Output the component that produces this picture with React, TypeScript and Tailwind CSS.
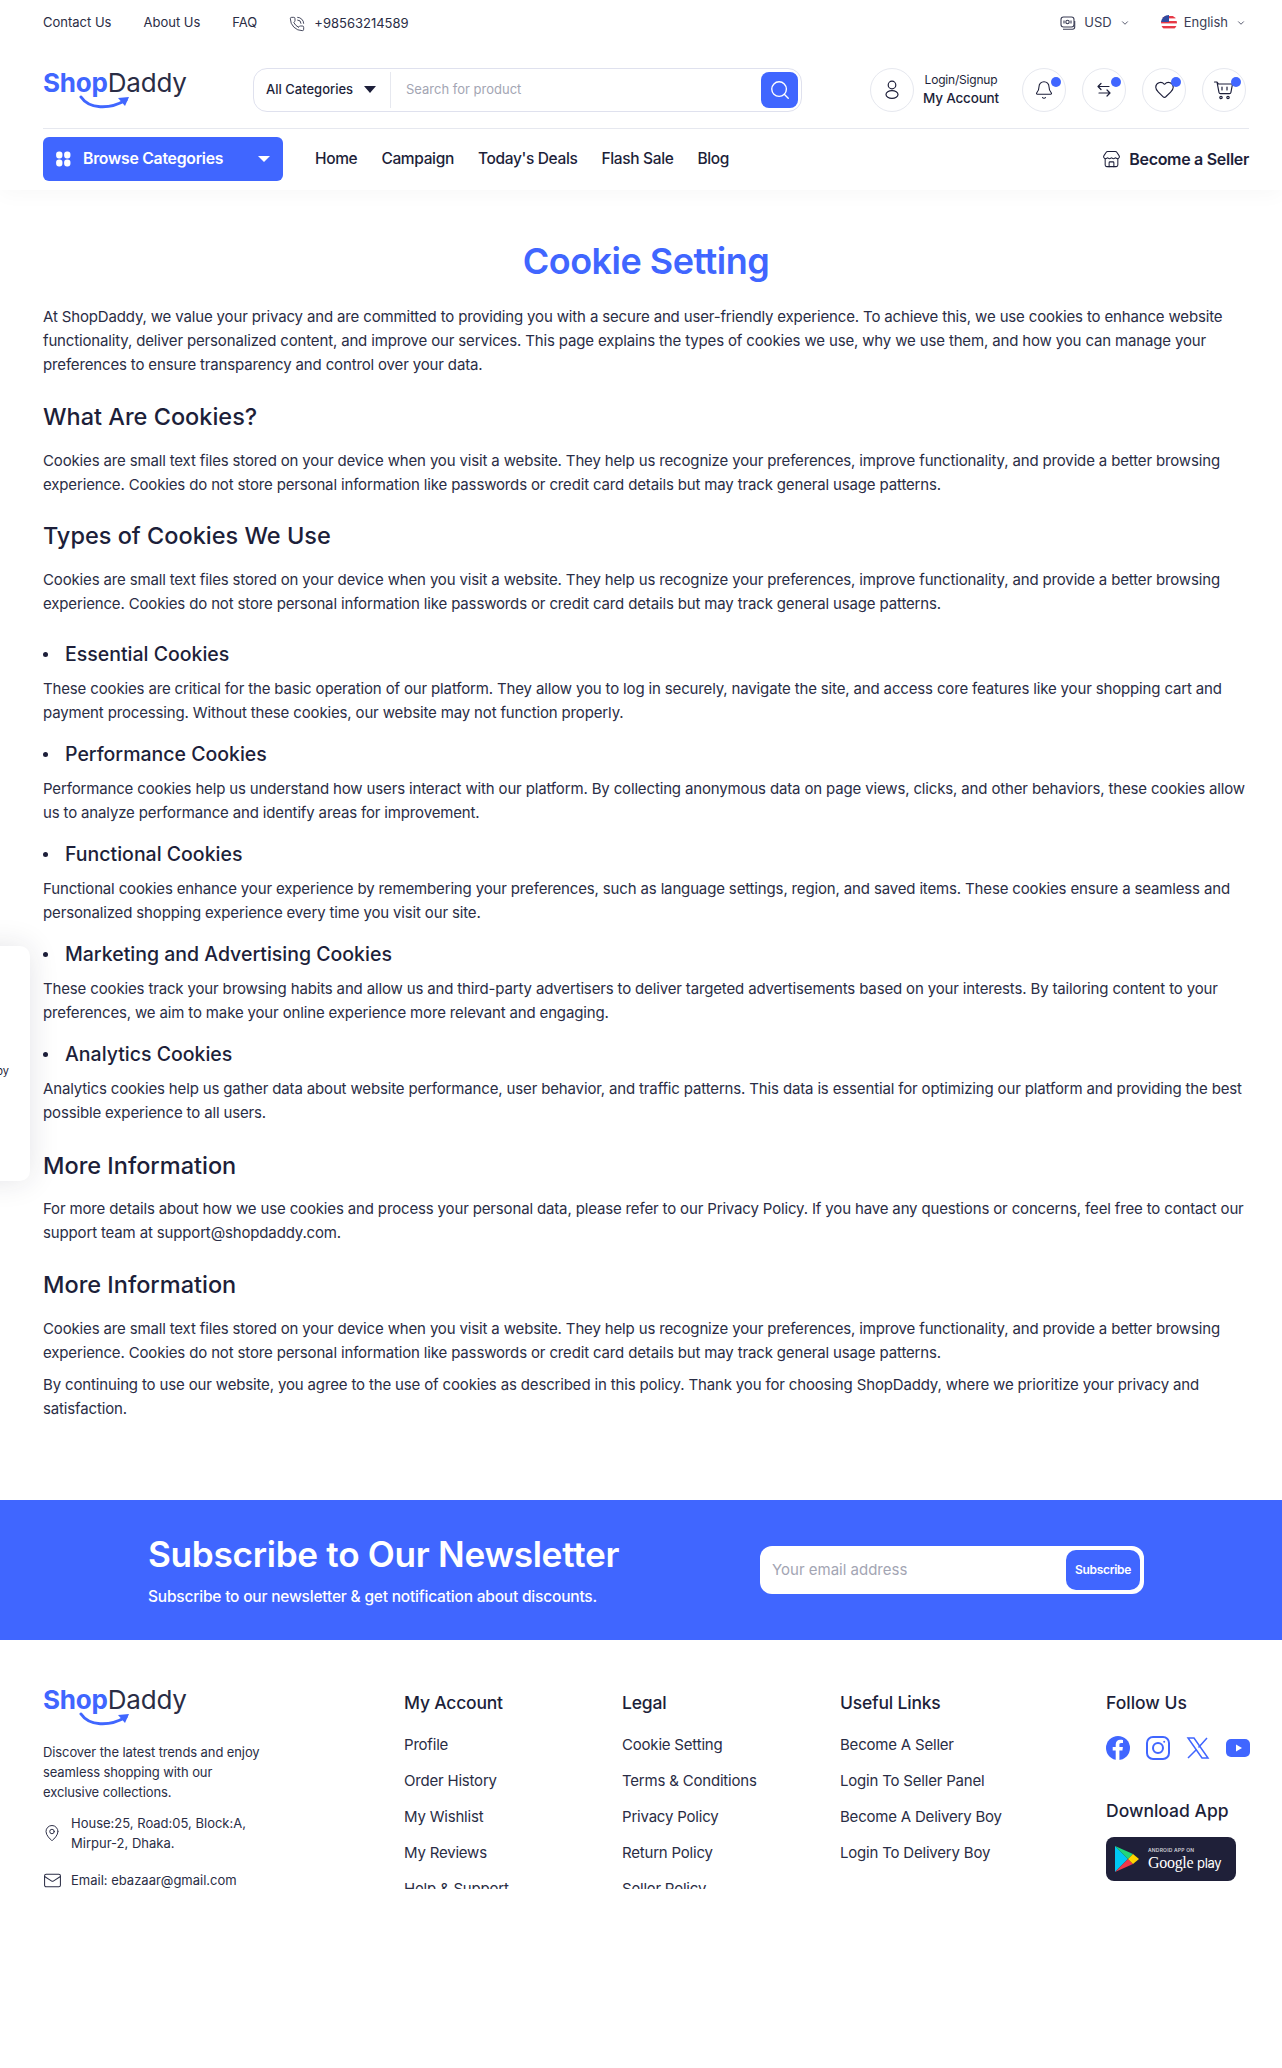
import { ChevronDown, MapPin, Mail, PhoneCall, Search, Bell, Heart, Store } from "lucide-react";

const font = "font-['Inter','Noto_Sans',sans-serif]";

function Logo() {
  return (
    <div className="relative h-[44px] w-[144px] font-['Inter',sans-serif] text-[26px] leading-[30px] tracking-[-0.2px]">
      <span className="font-bold text-[#4066ff]">Shop</span>
      <span className="font-normal text-[#2a2d45]">Daddy</span>
      <svg className="absolute left-[36px] top-[27px]" width="54" height="17" viewBox="0 0 54 17" fill="none">
        <path d="M2 2 C10 14 30 15 47 5" stroke="#4066ff" strokeWidth="3" strokeLinecap="round" />
        <path d="M39 3 L50 2 L46 11" fill="#4066ff" />
      </svg>
    </div>
  );
}

function IconCircle({ children }: { children: React.ReactNode }) {
  return (
    <div className="relative flex h-[44px] w-[44px] shrink-0 items-center justify-center rounded-full border border-[#e6e8ef]">
      {children}
      <span className="absolute right-[4px] top-[8px] h-[10px] w-[10px] rounded-full bg-[#4066ff]" />
    </div>
  );
}

function Para({ children }: { children: React.ReactNode }) {
  return <p className="text-[15px] leading-[24px] tracking-[-0.15px] text-[#2a2d45]">{children}</p>;
}

function H2({ children }: { children: React.ReactNode }) {
  return <h2 className="text-[23.5px] font-medium leading-[32px] text-[#1d1f3a]">{children}</h2>;
}

function Bullet({ title, children }: { title: string; children: React.ReactNode }) {
  return (
    <div className="mb-[15px]">
      <div className="mb-[9px] flex items-center">
        <span className="mr-[17px] h-[5px] w-[5px] rounded-full bg-[#1d1f3a]" />
        <h3 className="text-[19.5px] font-medium leading-[28px] text-[#1d1f3a]">{title}</h3>
      </div>
      <Para>{children}</Para>
    </div>
  );
}

const cookieText =
  "Cookies are small text files stored on your device when you visit a website. They help us recognize your preferences, improve functionality, and provide a better browsing experience. Cookies do not store personal information like passwords or credit card details but may track general usage patterns.";

function FooterCol({ title, items, className }: { title: string; items: string[]; className: string }) {
  return (
    <div className={className}>
      <h4 className="mb-[16px] text-[17.5px] font-medium leading-[28px] tracking-[-0.2px] text-[#1d1f3a]">{title}</h4>
      <ul className="space-y-[12px] text-[15px] leading-[24px] tracking-[-0.2px] text-[#2a2d45]">
        {items.map((item) => (
          <li key={item}>{item}</li>
        ))}
      </ul>
    </div>
  );
}

export default function App() {
  return (
    <div className={`${font} relative h-[2068px] w-full overflow-hidden bg-white text-[#1d1f3a]`}>
      <header className="h-[190px] bg-white pl-[43px] pr-[33px] shadow-[0_4px_20px_rgba(0,0,0,0.03)]">
        <div className="flex h-[46px] items-center justify-between text-[13px]">
          <div className="flex items-center gap-[32px] text-[#2a2d45]">
            <span>Contact Us</span>
            <span>About Us</span>
            <span>FAQ</span>
            <span className="flex items-center gap-[9px] pt-[2px]">
              <PhoneCall size={16} strokeWidth={1.3} />
              +98563214589
            </span>
          </div>
          <div className="flex items-center gap-[5px] pr-[3px] text-[#3a3d55]">
            <svg width="16" height="16" viewBox="0 0 16 16" fill="none" stroke="#3a3d55" strokeWidth="1.1">
              <rect x="1" y="2" width="13" height="10" rx="2.5" />
              <path d="M3 14.2h9.5c1.3 0 2.2-.8 2.2-2.2V6" />
              <circle cx="7.5" cy="7" r="1.7" />
              <path d="M4 5.5v3M11 5.5v3" />
            </svg>
            <span className="ml-[3px]">USD</span>
            <ChevronDown size={10} className="ml-[3px] mr-[26px]" />
            <svg width="16" height="16" viewBox="0 0 16 16">
              <defs>
                <clipPath id="flag"><circle cx="8" cy="8" r="8" /></clipPath>
              </defs>
              <g clipPath="url(#flag)">
                <rect width="16" height="16" fill="#fff" />
                <rect y="1" width="16" height="2.4" fill="#e63946" />
                <rect y="6" width="16" height="2.4" fill="#e63946" />
                <rect y="11" width="16" height="2.4" fill="#e63946" />
                <rect width="8" height="7" fill="#2f4aa0" />
              </g>
            </svg>
            <span className="ml-[2px]">English</span>
            <ChevronDown size={10} className="ml-[3px]" />
          </div>
        </div>

        <div className="flex h-[83px] items-center border-b border-[#e6e8ef] pt-[5px]">
          <Logo />
          <div className="ml-[66px] flex h-[44px] w-[549px] shrink-0 items-center rounded-[14px] border border-[#dfe1ee] pr-[3px]">
            <div className="flex h-[36px] w-[137px] items-center border-r border-[#e6e8ef] pl-[12px] text-[13px] font-medium">
              All Categories
              <span className="ml-[11px] h-0 w-0 border-x-[6px] border-t-[7px] border-x-transparent border-t-[#1d1f3a]" />
            </div>
            <input
              placeholder="Search for product"
              className="ml-[15px] min-w-0 flex-1 bg-transparent text-[13px] outline-none placeholder:text-[#a3a5b3]"
            />
            <button className="flex h-[36px] w-[37px] items-center justify-center rounded-[8px] bg-[#4066ff] text-white">
              <Search size={22} strokeWidth={1.5} />
            </button>
          </div>
          <div className="ml-[68px] flex shrink-0 items-center">
            <div className="flex h-[44px] w-[44px] items-center justify-center rounded-full border border-[#e6e8ef]">
              <svg width="20" height="22" viewBox="0 0 20 22" fill="none" stroke="#1d1f3a" strokeWidth="1.2">
                <circle cx="10" cy="6" r="3.8" />
                <ellipse cx="10" cy="15.5" rx="6" ry="3.8" />
              </svg>
            </div>
            <div className="ml-[9px] w-[76px] whitespace-nowrap text-center">
              <div className="text-[12px] leading-[16px] tracking-[-0.2px]">Login/Signup</div>
              <div className="text-[13.5px] font-medium leading-[20px] tracking-[-0.2px]">My Account</div>
            </div>
          </div>
          <div className="ml-[23px] flex shrink-0 gap-[16px]">
            <IconCircle><Bell size={20} strokeWidth={1.3} /></IconCircle>
            <IconCircle>
              <svg width="18" height="18" viewBox="0 0 18 18" fill="none" stroke="#1d1f3a" strokeWidth="1.2" strokeLinecap="round" strokeLinejoin="round">
                <path d="M14 5.5H3M6 2.5l-3 3 3 3" />
                <path d="M4 12h11M12 9l3 3-3 3" />
              </svg>
            </IconCircle>
            <IconCircle><Heart size={21} strokeWidth={1.3} /></IconCircle>
            <IconCircle>
              <svg width="22" height="22" viewBox="0 0 22 22" fill="none" stroke="#1d1f3a" strokeWidth="1.2" strokeLinecap="round" strokeLinejoin="round">
                <path d="M1.5 3h2.5l1.5 2h14l-1.6 8.5a1.5 1.5 0 0 1-1.5 1.2H7.5a1.5 1.5 0 0 1-1.5-1.2L4 3" />
                <path d="M9 8v3M14 8v3" />
                <circle cx="8" cy="18.5" r="1.2" />
                <circle cx="15" cy="18.5" r="1.2" />
              </svg>
            </IconCircle>
          </div>
        </div>

        <div className="flex h-[60px] items-center">
          <button className="flex h-[44px] w-[240px] shrink-0 items-center rounded-[6px] bg-[#4066ff] pl-[12px] pr-[13px] text-[15.8px] font-semibold tracking-[-0.25px] text-white">
            <svg width="16" height="16" viewBox="0 0 14 14" fill="white" className="mr-[12px]">
              <rect x="1" y="0.5" width="5.5" height="6" rx="2.5" />
              <rect x="8" y="0.5" width="5.5" height="6" rx="2.5" />
              <rect x="1" y="7.5" width="5.5" height="6" rx="2.5" />
              <rect x="8" y="7.5" width="5.5" height="6" rx="2.5" />
            </svg>
            Browse Categories
            <span className="ml-auto h-0 w-0 border-x-[6px] border-t-[6px] border-x-transparent border-t-white" />
          </button>
          <nav className="ml-[32px] flex gap-[24px] text-[15.5px] font-medium tracking-[-0.35px]">
            <span>Home</span>
            <span>Campaign</span>
            <span>Today's Deals</span>
            <span>Flash Sale</span>
            <span>Blog</span>
          </nav>
          <div className="ml-auto flex items-center gap-[8px] text-[16px] font-semibold tracking-[-0.3px]">
            <Store size={19} strokeWidth={1.3} />
            Become a Seller
          </div>
        </div>
      </header>

      {/* left drawer peeking in */}
      <div className="absolute left-[-90px] top-[946px] flex h-[235px] w-[120px] items-center justify-end rounded-[10px] bg-white pr-[21px] pt-[16px] text-[11px] shadow-[0_0_30px_rgba(30,30,60,0.12)]">
        py
      </div>

      <main className="pl-[43px] pr-[33px] pt-[49px]">
        <h1 className="mb-[22px] text-center text-[36px] font-semibold leading-[44px] tracking-[-0.5px] text-[#4066ff]">
          Cookie Setting
        </h1>
        <Para>
          At ShopDaddy, we value your privacy and are committed to providing you with a secure and user-friendly experience. To achieve this, we use cookies to enhance website functionality, deliver personalized content, and improve our services. This page explains the types of cookies we use, why we use them, and how you can manage your preferences to ensure transparency and control over your data.
        </Para>

        <div className="mb-[16px] mt-[24px]"><H2>What Are Cookies?</H2></div>
        <Para>{cookieText}</Para>

        <div className="mb-[16px] mt-[23px]"><H2>Types of Cookies We Use</H2></div>
        <Para>{cookieText}</Para>

        <div className="mt-[24px]">
          <Bullet title="Essential Cookies">
            These cookies are critical for the basic operation of our platform. They allow you to log in securely, navigate the site, and access core features like your shopping cart and payment processing. Without these cookies, our website may not function properly.
          </Bullet>
          <Bullet title="Performance Cookies">
            Performance cookies help us understand how users interact with our platform. By collecting anonymous data on page views, clicks, and other behaviors, these cookies allow us to analyze performance and identify areas for improvement.
          </Bullet>
          <Bullet title="Functional Cookies">
            Functional cookies enhance your experience by remembering your preferences, such as language settings, region, and saved items. These cookies ensure a seamless and personalized shopping experience every time you visit our site.
          </Bullet>
          <Bullet title="Marketing and Advertising Cookies">
            These cookies track your browsing habits and allow us and third-party advertisers to deliver targeted advertisements based on your interests. By tailoring content to your preferences, we aim to make your online experience more relevant and engaging.
          </Bullet>
          <Bullet title="Analytics Cookies">
            Analytics cookies help us gather data about website performance, user behavior, and traffic patterns. This data is essential for optimizing our platform and providing the best possible experience to all users.
          </Bullet>
        </div>

        <div className="mb-[15px] mt-[25px]"><H2>More Information</H2></div>
        <Para>
          For more details about how we use cookies and process your personal data, please refer to our Privacy Policy. If you have any questions or concerns, feel free to contact our support team at support@shopdaddy.com.
        </Para>

        <div className="mb-[16px] mt-[24px]"><H2>More Information</H2></div>
        <Para>{cookieText}</Para>
        <div className="mt-[8px]">
          <Para>
            By continuing to use our website, you agree to the use of cookies as described in this policy. Thank you for choosing ShopDaddy, where we prioritize your privacy and satisfaction.
          </Para>
        </div>
      </main>

      <section className="mt-[79px] flex h-[140px] items-center bg-[#4066ff] pl-[148px] text-white">
        <div className="w-[612px]">
          <h2 className="mb-[9px] text-[35.2px] font-semibold leading-[44px] tracking-[-0.3px]">Subscribe to Our Newsletter</h2>
          <p className="text-[15.5px] font-medium tracking-[-0.2px]">Subscribe to our newsletter &amp; get notification about discounts.</p>
        </div>
        <div className="flex h-[48px] w-[384px] items-center rounded-[12px] bg-white p-[4px] pl-[12px]">
          <input placeholder="Your email address" className="min-w-0 flex-1 bg-transparent text-[15px] text-[#1d1f3a] outline-none placeholder:text-[#a3a5b3]" />
          <button className="h-[40px] w-[74px] rounded-[10px] bg-[#4066ff] text-[12px] font-semibold tracking-[-0.3px] text-white">Subscribe</button>
        </div>
      </section>

      <footer className="flex h-[249px] overflow-hidden bg-white pl-[43px] pr-[33px] pt-[45px]">
        <div className="w-[361px] shrink-0">
          <Logo />
          <p className="mb-[11px] mt-[13px] w-[225px] text-[13px] leading-[20px] tracking-[-0.1px] text-[#2a2d45]">
            Discover the latest trends and enjoy seamless shopping with our exclusive collections.
          </p>
          <div className="mb-[17px] flex items-center gap-[10px] text-[13px] leading-[20px] text-[#2a2d45]">
            <MapPin size={18} strokeWidth={1.3} className="shrink-0" />
            <span className="w-[190px]">House:25, Road:05, Block:A, Mirpur-2, Dhaka.</span>
          </div>
          <div className="flex items-center gap-[9px] text-[13px] leading-[20px] text-[#2a2d45]">
            <Mail size={19} strokeWidth={1.3} className="shrink-0" />
            Email: ebazaar@gmail.com
          </div>
        </div>
        <FooterCol title="My Account" className="w-[218px] shrink-0 pt-[4px]" items={["Profile", "Order History", "My Wishlist", "My Reviews", "Help & Support"]} />
        <FooterCol title="Legal" className="w-[218px] shrink-0 pt-[4px]" items={["Cookie Setting", "Terms & Conditions", "Privacy Policy", "Return Policy", "Seller Policy"]} />
        <FooterCol title="Useful Links" className="w-[266px] shrink-0 pt-[4px]" items={["Become A Seller", "Login To Seller Panel", "Become A Delivery Boy", "Login To Delivery Boy"]} />
        <div className="pt-[4px]">
          <h4 className="mb-[19px] text-[17.5px] font-medium leading-[28px]">Follow Us</h4>
          <div className="flex items-center gap-[16px]">
            <svg width="24" height="24" viewBox="0 0 24 24">
              <circle cx="12" cy="12" r="12" fill="#4066ff" />
              <path d="M13.4 24v-9.4h3l.5-3.6h-3.5V8.9c0-1 .3-1.8 1.8-1.8H17V4c-.4-.1-1.5-.2-2.7-.2-2.7 0-4.6 1.7-4.6 4.7V11H6.7v3.6h3V24z" fill="#fff" />
            </svg>
            <svg width="24" height="24" viewBox="0 0 24 24" fill="none" stroke="#4066ff" strokeWidth="2">
              <rect x="1" y="1" width="22" height="22" rx="6" />
              <circle cx="12" cy="12" r="5" />
              <circle cx="18.2" cy="5.8" r="1" fill="#4066ff" stroke="none" />
            </svg>
            <svg width="24" height="22" viewBox="0 0 24 22" fill="none" stroke="#4066ff" strokeWidth="1.5">
              <path d="M2 1h6l14 20h-6z" />
              <path d="M21 1l-8.5 9.5M10.5 12.5L2 21" />
            </svg>
            <svg width="24" height="18" viewBox="0 0 24 18">
              <rect width="24" height="18" rx="5" fill="#4066ff" />
              <path d="M10 5.5l6 3.5-6 3.5z" fill="#fff" />
            </svg>
          </div>
          <h4 className="mb-[12px] mt-[37px] text-[17.5px] font-medium leading-[28px]">Download App</h4>
          <div className="relative flex h-[44px] w-[130px] items-center rounded-[8px] bg-[#1f2039] pl-[9px] text-white">
            <svg width="24" height="26" viewBox="0 0 24 26">
              <path d="M0 0v26l13-13z" fill="#00c8f4" />
              <path d="M0 0l13 13 5-5z" fill="#22d67a" />
              <path d="M0 26l13-13 5 5z" fill="#f0394a" />
              <path d="M18 8l6 5-6 5-5-5z" fill="#ffd400" />
            </svg>
            <div className="ml-[9px] leading-none">
              <div className="text-[5px] font-semibold tracking-[0.2px] text-[#d0d0d8]">ANDROID APP ON</div>
              <div className="mt-[2px] font-['Liberation_Serif',serif] text-[16px] tracking-[-0.3px]">
                Google <span className="font-['Inter',sans-serif] text-[13px]">play</span>
              </div>
            </div>
          </div>
        </div>
      </footer>
    </div>
  );
}
